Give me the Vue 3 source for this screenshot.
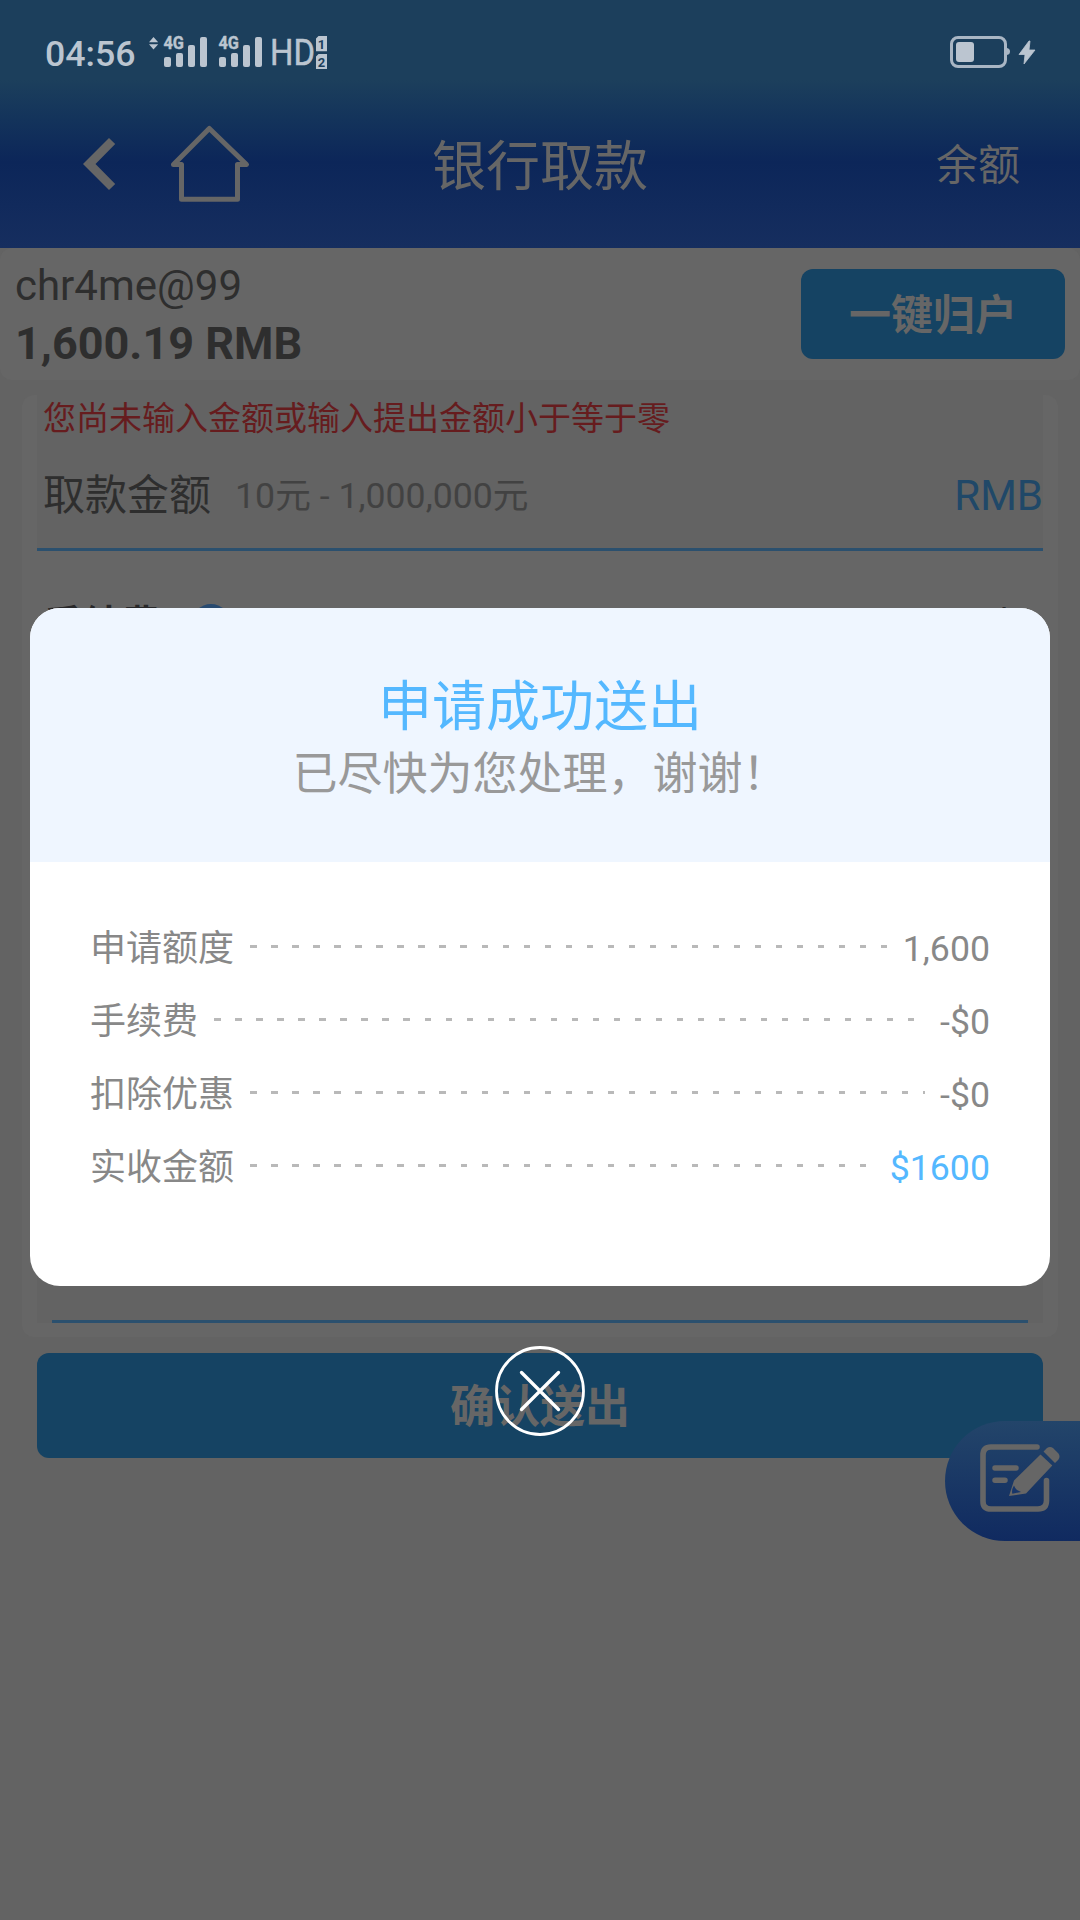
<script setup>
const rows = [
  { label: '申请额度', value: '1,600' },
  { label: '手续费', value: '-$0' },
  { label: '扣除优惠', value: '-$0' },
  { label: '实收金额', value: '$1600', accent: true },
]
const simCards = [0, 55]
</script>

<template>
  <div class="screen">
    <header class="header">
      <div class="status">
        <span class="time">04:56</span>
        <svg class="signal" width="200" height="40" viewBox="144 32 200 40" fill="#bbc5d0">
          <path d="M149 42.2 153.5 37l4.7 5.2zM149 44.2h9.2l-4.7 5.2z" />
          <g v-for="dx in simCards" :key="dx" :transform="`translate(${dx} 0)`">
            <text x="163.5" y="49.300" font-size="17.800" font-weight="700" textLength="20.5" lengthAdjust="spacingAndGlyphs" stroke="#bbc5d0" stroke-width=".4">4G</text>
            <rect x="164" y="57" width="7" height="10" rx="2" />
            <rect x="176" y="53" width="7" height="14" rx="2" />
            <rect x="188" y="45" width="7" height="22" rx="2" />
            <rect x="200" y="37" width="7" height="30" rx="2" />
          </g>
          <text x="270" y="65" font-size="36" textLength="45" lengthAdjust="spacingAndGlyphs" stroke="#bbc5d0" stroke-width=".5">HD</text>
          <path d="M318.500 36H327v15.300h-11V38.500zM318.500 54H327v15h-11V56.500z" />
          <text class="sim" x="321.500" y="48.500" text-anchor="middle">1</text>
          <text class="sim" x="321.500" y="66.500" text-anchor="middle">2</text>
        </svg>
        <svg class="battery" width="90" height="40" viewBox="948 32 90 40" fill="#bbc5d0">
          <rect x="951.5" y="37.500" width="54" height="29" rx="6.500" fill="none" stroke="#a9b6c4" stroke-width="3" />
          <rect x="956" y="42" width="18" height="20" rx="3" />
          <path d="M1007 48q3 .500 3 3.500t-3 3.500z" fill="#a9b6c4" />
          <path d="M1029 41 1019 54.500h6l-1 9.500 11-14h-6l1-9z" stroke="#bbc5d0" stroke-width=".8" stroke-linejoin="round" />
        </svg>
      </div>
      <nav class="nav">
        <div class="nav-left">
          <svg width="34" height="54" viewBox="82 136.500 34 54"><path d="M83 163.500 109 137.500 115.200 143.600 95.500 163.500 115.200 183.400 109 189.500z" fill="#666" /></svg>
          <svg class="home" width="80" height="78" viewBox="170 125 80 78"><path d="M209.300 128.500 246.500 164.500H237.500V199.300H181.500V164.500H173.500z" fill="none" stroke="#666" stroke-width="5" stroke-linejoin="round" /></svg>
        </div>
        <h1>银行取款</h1>
        <span class="balance">余额</span>
      </nav>
    </header>

    <section class="account">
      <div>
        <div class="user">chr4me@99</div>
        <div class="money">1,600.19 RMB</div>
      </div>
      <button class="collect">一键归户</button>
    </section>

    <section class="card">
      <div class="amount">
        <div class="warning">您尚未输入金额或输入提出金额小于等于零</div>
        <div class="amount-row">
          <span class="amount-label">取款金额</span>
          <span class="hint">10元 - 1,000,000元</span>
          <span class="currency">RMB</span>
        </div>
      </div>
      <div class="fee">
        <span class="fee-label">手续费</span>
        <i class="info"></i>
        <span class="fee-value">$0</span>
      </div>
      <div class="field"></div>
    </section>
    <button class="submit">确认送出</button>

    <div class="float">
      <svg width="90" height="84" viewBox="975 1438 90 84">
        <path d="M1037 1447H991q-8 0-8 8v46.500q0 7.500 8 7.500h47q8.500 0 8.500-8.500V1480.500" fill="none" stroke="#666" stroke-width="5.600" stroke-linecap="round" />
        <path d="M995 1468h21M995 1480.300h10" fill="none" stroke="#666" stroke-width="5.500" stroke-linecap="round" />
        <path d="M1040.500 1454.500 1052.300 1465.500 1026 1493.500 1009 1496 1014 1480.500zM1043.500 1451.500 1047 1448q3-2 6 0l5.500 5.500q2 3 0 6l-3.500 3.500z" fill="#666" />
        <path d="M1014 1485.500q1 3 3 4.500l4 2-8.700 1.800q-1-4 1.700-8.300z" fill="#17366a" />
      </svg>
    </div>

    <div class="modal">
      <div class="modal-head">
        <h2>申请成功送出</h2>
        <p>已尽快为您处理，谢谢！</p>
      </div>
      <div class="detail">
        <div v-for="row in rows" :key="row.label" class="detail-row">
          <span>{{ row.label }}</span>
          <i class="dashes"></i>
          <span class="value" :class="{ accent: row.accent }">{{ row.value }}</span>
        </div>
      </div>
    </div>
    <svg class="close" width="90" height="90" viewBox="0 0 90 90" fill="none" stroke="#fff">
      <circle cx="45" cy="45" r="43.500" stroke-width="2.800" />
      <path d="M26.500 26.500 63.500 63.500M63.500 26.500 26.500 63.500" stroke-width="3.300" stroke-linecap="round" />
    </svg>
  </div>
</template>

<style>
body { background: #636363; }
</style>

<style scoped>
.screen {
  position: relative;
  width: 1080px;
  height: 1920px;
  overflow: hidden;
  background: #636363;
  font-family: Roboto, "Noto Sans CJK SC", sans-serif;
}
.screen * { box-sizing: border-box; }
h1, h2, p { margin: 0; font-weight: 400; }
svg { display: block; overflow: visible; }
button { border: 0; padding: 0; font-family: inherit; font-weight: 700; color: #666; background: #154363; border-radius: 12px; }
.header {
  height: 248px;
  background: linear-gradient(#1c3f5c 0, #1c3f5c 80px, #13335b 120px, #0c2659 162px, #162e5f 248px);
}
.status { height: 80px; padding-top: 32px; display: flex; align-items: flex-start; color: #bbc5d0; }
.time { width: 99px; margin-left: 45px; line-height: 44px; font-size: 35.700px; font-weight: 500; }
.battery { margin-left: auto; margin-right: 42px; }
.sim { font-size: 13px; font-weight: 700; fill: #1c3f5c; }
.nav { height: 168px; display: grid; grid-template-columns: 1fr auto 1fr; align-items: center; color: #666; padding: 0 60px 0 82px; }
.nav-left { display: flex; align-items: center; }
.home { margin-left: 54px; }
.nav h1 { font-size: 54px; line-height: 72px; width: 238px; margin-right: 22px; padding: 7px 0 0 11px; white-space: nowrap; }
.balance { font-size: 42px; line-height: 60px; padding-top: 4px; text-align: right; }
.account { height: 132px; padding: 0 15px; display: flex; justify-content: space-between; align-items: center; background: #666; border-radius: 12px; color: #2e2e2e; }
.user { font-size: 42px; line-height: 58px; padding-top: 2px; }
.money { font-size: 45px; line-height: 58px; font-weight: 700; }
.collect { width: 264px; height: 90px; padding-top: 4px; font-size: 42px; line-height: 86px; }
.card { width: 1036px; height: 942px; margin: 15px auto 0; padding: 0 15px; background: #666; border-radius: 12px; }
.amount { height: 156px; padding: 0 0 0 6px; background: #636363; border-bottom: 3px solid #2b506e; }
.warning { height: 49px; line-height: 48px; font-size: 33px; color: #661c1e; white-space: nowrap; }
.amount-row { height: 104px; display: flex; align-items: center; line-height: 60px; }
.amount-label { font-size: 42px; color: #2e2e2e; }
.hint { margin-left: 24px; font-size: 35.700px; color: #424242; }
.currency { margin-left: auto; font-size: 42px; color: #204868; }
.fee { height: 144px; padding-left: 7px; display: flex; align-items: center; color: #28282a; }
.fee-label { font-size: 39px; font-weight: 700; padding-bottom: 4px; }
.info { width: 38px; height: 38px; margin-left: 31px; border-radius: 50%; background: #284a70; }
.fee-value { margin-left: auto; font-size: 42px; padding: 10px 4px 0 0; }
.field { height: 628px; background: linear-gradient(#2b506e, #2b506e) 15px 100% / 976px 3px no-repeat #636363; }
.submit { display: block; width: 1006px; height: 105px; margin: 16px auto 0; padding-top: 4px; font-size: 45px; line-height: 101px; }
.float { position: absolute; left: 945px; top: 1421px; width: 135px; height: 120px; padding: 17px 0 0 30px; border-radius: 60px 0 0 60px; background: linear-gradient(#23456a, #102a60); }
.modal { position: absolute; left: 30px; top: 608px; width: 1020px; height: 678px; border-radius: 30px; overflow: hidden; background: #fff; }
.modal-head { height: 254px; padding-top: 65px; background: #eff6ff; text-align: center; }
.modal-head h2 { height: 72px; line-height: 70px; font-size: 54px; color: #54b8ff; }
.modal-head p { height: 64px; line-height: 59px; font-size: 45px; color: #999; }
.detail { padding: 51px 60px; }
.detail-row { height: 73px; display: flex; align-items: center; line-height: 73px; font-size: 36px; color: #888; }
.value { font-size: 35.700px; }
.dashes { flex: 1; height: 3px; margin: 0 15px 7px 15px; background: repeating-linear-gradient(90deg, transparent 0 1.300px, #b9b9b9 1.300px 7.700px, transparent 7.700px 21.020px); }
.accent { color: #54b8ff; }
.close { position: absolute; left: 495px; top: 1346px; }
</style>
